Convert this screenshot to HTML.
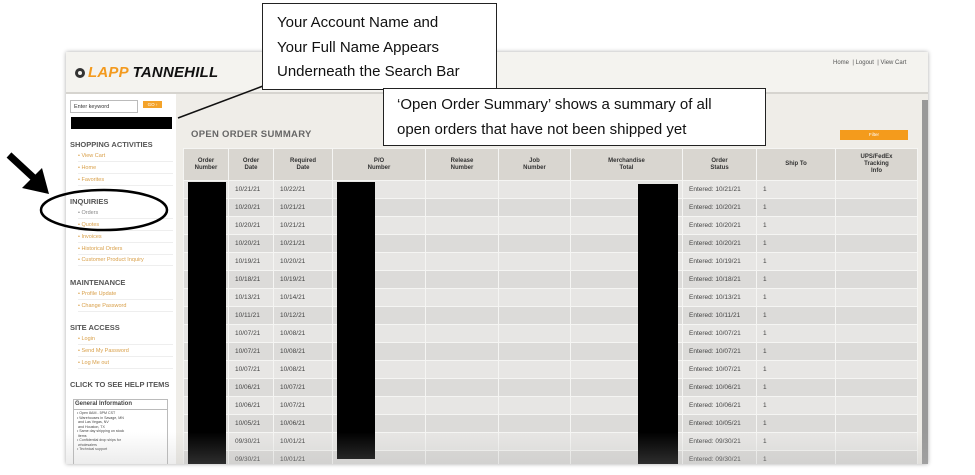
<!DOCTYPE html>
<html><head><meta charset="utf-8"><style>
body{margin:0;width:975px;height:475px;background:#fff;position:relative;overflow:hidden;font-family:"Liberation Sans",Arial,sans-serif}
.abs{position:absolute}
#shot{left:66px;top:52px;width:862px;height:412px;background:#efede8;box-shadow:0 0 4px #aaa;overflow:hidden}
#hdr{left:0;top:0;width:862px;height:40px;background:#f4f3ef;border-bottom:2px solid #d6d4cf}
#side{left:0;top:42px;width:110px;height:370px;background:#fff}
.sec{position:absolute;left:4px;font-size:7.5px;font-weight:bold;color:#555}
.lnk{position:absolute;left:12px;font-size:5.5px;color:#d9a04a;width:95px;border-bottom:1px solid #eee;padding-bottom:2px}
table{position:absolute;left:117px;top:96px;border-collapse:collapse;table-layout:fixed;width:734px}
td,th{border:1px solid #f5f5f3;font-size:6.5px;padding:0 0 0 6px;height:17px;color:#444;white-space:nowrap;overflow:hidden}
th{background:#d9d6d0;height:31px;text-align:center;padding:0;font-weight:bold;color:#333;font-size:6px;line-height:7px}
tr:nth-child(even) td{background:#e7e6e4}
tr:nth-child(odd) td{background:#dcdbd9}
.blk{position:absolute;background:#000}
.call{position:absolute;background:#fff;border:1.5px solid #222;font-family:"Liberation Sans",sans-serif;font-size:15px;color:#111;line-height:24.5px;box-sizing:border-box}
</style></head><body>
<div id="shot" class="abs">
 <div id="hdr" class="abs">
  <div class="abs" style="left:9px;top:16px;width:10px;height:10px;border-radius:50%;background:#333"></div>
  <div class="abs" style="left:12px;top:19px;width:4px;height:4px;border-radius:50%;background:#f4f3ef"></div>
  <div class="abs" style="left:22px;top:12px;font-size:15px;font-weight:bold;font-style:italic;letter-spacing:0.2px"><span style="color:#f39a1e">LAPP</span> <span style="color:#111">TANNEHILL</span></div>
  <div class="abs" style="left:767px;top:8px;font-size:6px;color:#555">Home &nbsp;| Logout &nbsp;| View Cart</div>
 </div>
 <div class="abs" style="left:110px;top:42px;width:752px;height:370px;background:#efede8"></div>
 <div class="abs" style="left:856px;top:48px;width:6px;height:364px;background:#999"></div>
 <div id="side" class="abs">
  <div class="abs" style="left:4px;top:6px;width:68px;height:13px;border:1px solid #bbb;font-size:5.5px;line-height:13px;padding-left:3px;box-sizing:border-box;color:#333">Enter keyword</div>
  <div class="abs" style="left:77px;top:7px;width:19px;height:7px;background:#f4a32a;font-size:4.5px;color:#fff;text-align:center;line-height:7px">GO ›</div>
  <div class="abs" style="left:5px;top:23px;width:101px;height:12px;background:#000"></div>
  <div class="sec" style="top:46px">SHOPPING ACTIVITIES</div>
  <div class="lnk" style="top:59px">• View Cart</div>
  <div class="lnk" style="top:71px">• Home</div>
  <div class="lnk" style="top:83px">• Favorites</div>
  <div class="sec" style="top:103px">INQUIRIES</div>
  <div class="lnk" style="top:116px;color:#888">• Orders</div>
  <div class="lnk" style="top:128px">• Quotes</div>
  <div class="lnk" style="top:140px">• Invoices</div>
  <div class="lnk" style="top:152px">• Historical Orders</div>
  <div class="lnk" style="top:163px">• Customer Product Inquiry</div>
  <div class="sec" style="top:184px">MAINTENANCE</div>
  <div class="lnk" style="top:197px">• Profile Update</div>
  <div class="lnk" style="top:209px">• Change Password</div>
  <div class="sec" style="top:229px">SITE ACCESS</div>
  <div class="lnk" style="top:242px">• Login</div>
  <div class="lnk" style="top:254px">• Send My Password</div>
  <div class="lnk" style="top:266px">• Log Me out</div>
  <div class="sec" style="top:286px">CLICK TO SEE HELP ITEMS</div>
  <div class="abs" style="left:7px;top:305px;width:93px;height:64px;border:1px solid #bbb;font-size:3.6px;color:#444;line-height:4.5px">
   <div style="font-size:6px;font-weight:bold;border-bottom:1px solid #bbb;padding:1px;line-height:7px">General Information</div>
   <div style="padding:1px 3px">• Open 8AM - 5PM CST<br>• Warehouses in Savage, MN<br>&nbsp;and Las Vegas, NV<br>&nbsp;and Houston, TX<br>• Same day shipping on stock<br>&nbsp;items<br>• Confidential drop ships for<br>&nbsp;wholesalers<br>• Technical support</div>
  </div>
 </div>
 <div class="abs" style="left:125px;top:77px;font-size:9.5px;font-weight:bold;color:#666;letter-spacing:0.3px">OPEN ORDER SUMMARY</div>
 <div class="abs" style="left:774px;top:78px;width:68px;height:10px;background:#f49b1c;font-size:4.5px;color:#fff;text-align:center;line-height:10px">Filter</div>
 <table>
  <colgroup><col style="width:45px"><col style="width:45px"><col style="width:59px"><col style="width:93px"><col style="width:73px"><col style="width:72px"><col style="width:112px"><col style="width:74px"><col style="width:79px"><col style="width:82px"></colgroup>
  <tr><th>Order<br>Number</th><th>Order<br>Date</th><th>Required<br>Date</th><th>P/O<br>Number</th><th>Release<br>Number</th><th>Job<br>Number</th><th>Merchandise<br>Total</th><th>Order<br>Status</th><th>Ship To</th><th>UPS/FedEx<br>Tracking<br>Info</th></tr>
  <tr><td></td><td>10/21/21</td><td>10/22/21</td><td></td><td></td><td></td><td></td><td>Entered: 10/21/21</td><td>1</td><td></td></tr>
  <tr><td></td><td>10/20/21</td><td>10/21/21</td><td></td><td></td><td></td><td></td><td>Entered: 10/20/21</td><td>1</td><td></td></tr>
  <tr><td></td><td>10/20/21</td><td>10/21/21</td><td></td><td></td><td></td><td></td><td>Entered: 10/20/21</td><td>1</td><td></td></tr>
  <tr><td></td><td>10/20/21</td><td>10/21/21</td><td></td><td></td><td></td><td></td><td>Entered: 10/20/21</td><td>1</td><td></td></tr>
  <tr><td></td><td>10/19/21</td><td>10/20/21</td><td></td><td></td><td></td><td></td><td>Entered: 10/19/21</td><td>1</td><td></td></tr>
  <tr><td></td><td>10/18/21</td><td>10/19/21</td><td></td><td></td><td></td><td></td><td>Entered: 10/18/21</td><td>1</td><td></td></tr>
  <tr><td></td><td>10/13/21</td><td>10/14/21</td><td></td><td></td><td></td><td></td><td>Entered: 10/13/21</td><td>1</td><td></td></tr>
  <tr><td></td><td>10/11/21</td><td>10/12/21</td><td></td><td></td><td></td><td></td><td>Entered: 10/11/21</td><td>1</td><td></td></tr>
  <tr><td></td><td>10/07/21</td><td>10/08/21</td><td></td><td></td><td></td><td></td><td>Entered: 10/07/21</td><td>1</td><td></td></tr>
  <tr><td></td><td>10/07/21</td><td>10/08/21</td><td></td><td></td><td></td><td></td><td>Entered: 10/07/21</td><td>1</td><td></td></tr>
  <tr><td></td><td>10/07/21</td><td>10/08/21</td><td></td><td></td><td></td><td></td><td>Entered: 10/07/21</td><td>1</td><td></td></tr>
  <tr><td></td><td>10/06/21</td><td>10/07/21</td><td></td><td></td><td></td><td></td><td>Entered: 10/06/21</td><td>1</td><td></td></tr>
  <tr><td></td><td>10/06/21</td><td>10/07/21</td><td></td><td></td><td></td><td></td><td>Entered: 10/06/21</td><td>1</td><td></td></tr>
  <tr><td></td><td>10/05/21</td><td>10/06/21</td><td></td><td></td><td></td><td></td><td>Entered: 10/05/21</td><td>1</td><td></td></tr>
  <tr><td></td><td>09/30/21</td><td>10/01/21</td><td></td><td></td><td></td><td></td><td>Entered: 09/30/21</td><td>1</td><td></td></tr>
  <tr><td></td><td>09/30/21</td><td>10/01/21</td><td></td><td></td><td></td><td></td><td>Entered: 09/30/21</td><td>1</td><td></td></tr>
 </table>
 <div class="blk" style="left:122px;top:130px;width:38px;height:282px"></div>
 <div class="blk" style="left:271px;top:130px;width:38px;height:277px"></div>
 <div class="blk" style="left:572px;top:132px;width:40px;height:280px"></div>
 <div class="abs" style="left:0;top:380px;width:862px;height:32px;background:linear-gradient(rgba(200,200,200,0),rgba(180,180,180,0.25))"></div>
</div>
<svg class="abs" style="left:0;top:0" width="975" height="475">
 <line x1="263" y1="86" x2="178" y2="118" stroke="#111" stroke-width="1.5"/>
 <ellipse cx="104" cy="210" rx="63" ry="20" fill="none" stroke="#000" stroke-width="2.5"/>
 <line x1="9" y1="155" x2="36" y2="180" stroke="#000" stroke-width="7"/>
 <polygon points="22,188 49,194 42,168" fill="#000"/>
</svg>
<div class="call" style="left:262px;top:3px;width:235px;height:87px;padding:7px 0 0 14px">Your Account Name and<br>Your Full Name Appears<br>Underneath the Search Bar</div>
<div class="call" style="left:383px;top:88px;width:383px;height:58px;padding:4px 0 0 13px">‘Open Order Summary’ shows a summary of all<br>open orders that have not been shipped yet</div>
</body></html>
